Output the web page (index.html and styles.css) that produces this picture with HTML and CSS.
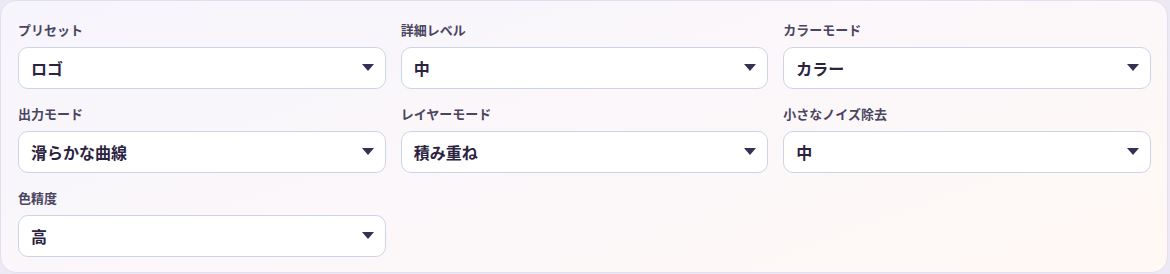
FILE: index.html
```html
<!DOCTYPE html>
<html lang="ja">
<head>
    <meta charset="UTF-8">
    <meta name="viewport" content="width=device-width, initial-scale=1.0">
    <title>設定</title>
    <link rel="stylesheet" href="styles.css">
</head>
<body>

<div class="panel">
    <div class="field">
        <div class="label">プリセット</div>
        <div class="select">ロゴ</div>
    </div>
    <div class="field">
        <div class="label">詳細レベル</div>
        <div class="select">中</div>
    </div>
    <div class="field">
        <div class="label">カラーモード</div>
        <div class="select">カラー</div>
    </div>

    <div class="field">
        <div class="label">出力モード</div>
        <div class="select">滑らかな曲線</div>
    </div>
    <div class="field">
        <div class="label">レイヤーモード</div>
        <div class="select">積み重ね</div>
    </div>
    <div class="field">
        <div class="label">小さなノイズ除去</div>
        <div class="select">中</div>
    </div>

    <div class="field">
        <div class="label">色精度</div>
        <div class="select">高</div>
    </div>
</div>

</body>
</html>
```

FILE: styles.css
```css
body {
    margin: 0;
    background-color: #ece8f4;
    font-family: "Noto Sans CJK JP", "Noto Sans", sans-serif;
}

.panel {
    display: grid;
    grid-template-columns: repeat(3, 1fr);
    column-gap: 15px;
    row-gap: 17px;
    width: 1168px;
    box-sizing: border-box;
    padding: 21px 16px 15px 17px;
    border: 1px solid #e4dfef;
    border-radius: 16px;
    background: linear-gradient(160deg, #f7f5fc 0%, #fbf7fa 50%, #fff8f4 100%);
}

.field {
    display: flex;
    flex-direction: column;
    gap: 9px;
}

.label {
    font-size: 13px;
    line-height: 16px;
    font-weight: 700;
    color: #4a4560;
}

.select {
    position: relative;
    height: 42px;
    box-sizing: border-box;
    padding: 0 12px;
    display: flex;
    align-items: center;
    background-color: #fff;
    border: 1px solid #cdd5e5;
    border-radius: 10px;
    font-size: 16px;
    font-weight: 700;
    color: #2b2340;
}

.select::after {
    content: "";
    position: absolute;
    right: 11px;
    top: 16px;
    border-left: 6.5px solid transparent;
    border-right: 6.5px solid transparent;
    border-top: 7px solid #3a2f52;
}
```
